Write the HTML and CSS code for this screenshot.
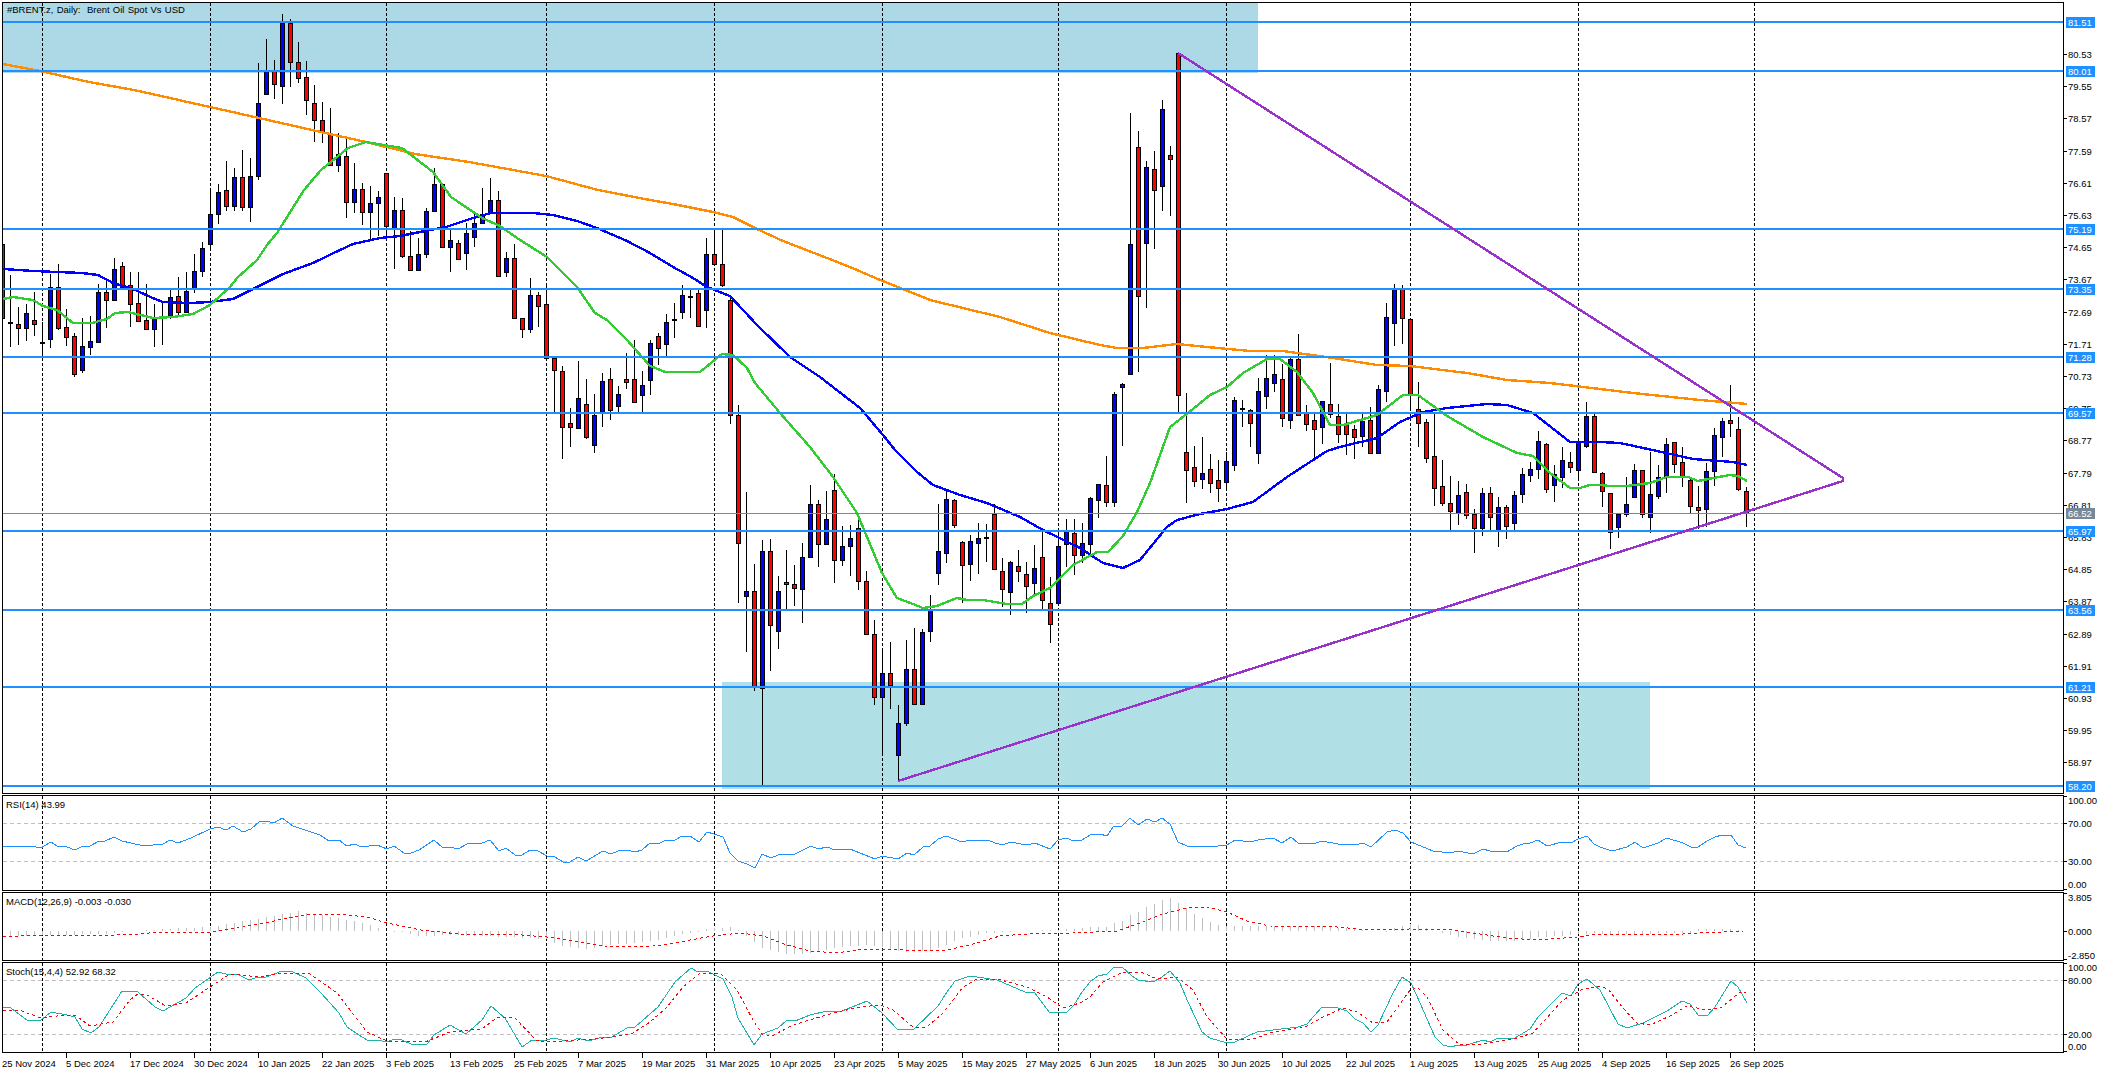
FILE: index.html
```html
<!DOCTYPE html>
<html lang="en">
<head>
    <meta charset="UTF-8">
    <title>#BRENT.z, Daily</title>
    <link rel="stylesheet" href="styles.css">
</head>
<body>
    <div class="terminal">
        <div class="pane pane-main">
            <div class="plot">
                <svg id="plot-main"></svg>
                <div class="legend legend-main">#BRENT.z, Daily:&nbsp; Brent Oil Spot Vs USD</div>
            </div>
            <svg class="scale" id="scale-main"></svg>
        </div>
        <div class="pane pane-rsi">
            <div class="plot">
                <svg id="plot-rsi"></svg>
                <div class="legend">RSI(14) 43.99</div>
            </div>
            <svg class="scale" id="scale-rsi"></svg>
        </div>
        <div class="pane pane-macd">
            <div class="plot">
                <svg id="plot-macd"></svg>
                <div class="legend">MACD(12,26,9) -0.003 -0.030</div>
            </div>
            <svg class="scale" id="scale-macd"></svg>
        </div>
        <div class="pane pane-stoch">
            <div class="plot">
                <svg id="plot-stoch"></svg>
                <div class="legend">Stoch(15,4,4) 52.92 68.32</div>
            </div>
            <svg class="scale" id="scale-stoch"></svg>
        </div>
        <div class="time-axis">
            <span class="date">25 Nov 2024</span>
            <span class="date">5 Dec 2024</span>
            <span class="date">17 Dec 2024</span>
            <span class="date">30 Dec 2024</span>
            <span class="date">10 Jan 2025</span>
            <span class="date">22 Jan 2025</span>
            <span class="date">3 Feb 2025</span>
            <span class="date">13 Feb 2025</span>
            <span class="date">25 Feb 2025</span>
            <span class="date">7 Mar 2025</span>
            <span class="date">19 Mar 2025</span>
            <span class="date">31 Mar 2025</span>
            <span class="date">10 Apr 2025</span>
            <span class="date">23 Apr 2025</span>
            <span class="date">5 May 2025</span>
            <span class="date">15 May 2025</span>
            <span class="date">27 May 2025</span>
            <span class="date">6 Jun 2025</span>
            <span class="date">18 Jun 2025</span>
            <span class="date">30 Jun 2025</span>
            <span class="date">10 Jul 2025</span>
            <span class="date">22 Jul 2025</span>
            <span class="date">1 Aug 2025</span>
            <span class="date">13 Aug 2025</span>
            <span class="date">25 Aug 2025</span>
            <span class="date">4 Sep 2025</span>
            <span class="date">16 Sep 2025</span>
            <span class="date">26 Sep 2025</span>
        </div>
    </div>
    <script src="chart.js"></script>
</body>
</html>
```

FILE: styles.css
```css
body {
    margin: 0;
    background: #fff;
    color: #000;
    font-family: "Liberation Sans", Arial, sans-serif;
    font-size: 9.5px;
    overflow: hidden;
}
.terminal {
    display: flex;
    flex-direction: column;
    gap: 1px;
    padding: 2px 0 0 2px;
    width: 2104px;
    height: 1071px;
}
.pane {
    display: flex;
    flex: none;
}
.pane-main { height: 792px; }
.pane-rsi { height: 96px; }
.pane-macd { height: 69px; }
.pane-stoch { height: 91px; }
.plot {
    position: relative;
    box-sizing: border-box;
    width: 2062px;
    border: 1px solid #000;
    overflow: hidden;
}
.plot svg {
    display: block;
    width: 2060px;
    height: 100%;
}
.scale {
    display: block;
    width: 42px;
    height: 100%;
}
.legend {
    position: absolute;
    top: 3px;
    left: 3px;
    line-height: 12px;
    white-space: nowrap;
}
.legend-main {
    top: 1px;
    left: 4px;
    word-spacing: .6px;
}
.time-axis {
    display: flex;
    margin-top: -1px;
}
.date {
    flex: none;
    width: 64px;
    line-height: 11px;
    white-space: nowrap;
}
.date::before {
    content: "";
    display: block;
    width: 1px;
    height: 5px;
    background: #000;
}
.date:first-child::before {
    visibility: hidden;
}

/* chart shapes */
svg * { shape-rendering: crispEdges; }
.zone-top { fill: #add8e6; }
.zone-bottom { fill: #b0e0e6; }
.grid {
    stroke: #000;
    stroke-width: 1;
    stroke-dasharray: 3 2;
}
.wick { stroke: #000; stroke-width: 1; }
.bull { fill: #00f; stroke: #000; stroke-width: 1; }
.bear { fill: #f00; stroke: #000; stroke-width: 1; }
.line { fill: none; }
.ma200 { stroke: #ff8c00; stroke-width: 2.4; }
.ma50 { stroke: #00f; stroke-width: 2.4; }
.ma20 { stroke: #32cd32; stroke-width: 2.4; }
.hline { stroke: #1e90ff; stroke-width: 2; }
.now { stroke: #778899; stroke-width: 1; }
.trend { stroke: #9932cc; stroke-width: 2.4; fill: none; }
.level {
    stroke: #c0c0c0;
    stroke-width: 1;
    stroke-dasharray: 4 3;
}
.rsi { stroke: #1e90ff; stroke-width: 1; }
.bar { stroke: #c0c0c0; stroke-width: 1; }
.signal {
    stroke: #f00;
    stroke-width: 1;
    stroke-dasharray: 3 3;
}
.stoch { stroke: #20b2aa; stroke-width: 1; }

/* price scale */
.tick { stroke: #000; stroke-width: 1; }
.tick-text { fill: #000; font-size: 9.5px; }
.tag { fill: #1e90ff; }
.tag-now { fill: #778899; }
.tag-text { fill: #fff; font-size: 9.5px; }
```

FILE: chart.js
```js
const NS = 'http://www.w3.org/2000/svg';

// bars: high, body top, body bottom, low, colour (pixel rows of the main pane)
const candles = [
    [244,244,318,318,'r'],[275,322,323,347,'r'],[307,324,328,345,'r'],[304,313,328,341,'b'],[292,320,324,336,'r'],
    [322,342,343,353,'b'],[274,287,339,348,'b'],[264,287,328,330,'r'],[309,327,337,346,'r'],[333,336,374,377,'r'],
    [318,346,370,373,'b'],[316,341,347,355,'b'],[284,292,342,342,'b'],[280,292,300,328,'r'],[258,269,300,300,'b'],
    [262,266,287,288,'r'],[272,285,304,327,'r'],[272,303,321,322,'r'],[284,320,329,329,'r'],[304,318,329,347,'b'],
    [303,317,318,345,'b'],[290,297,316,319,'b'],[277,296,312,316,'r'],[272,291,312,313,'b'],[254,271,288,293,'b'],
    [242,248,271,277,'b'],[188,214,244,250,'b'],[184,192,214,224,'b'],[161,190,206,211,'r'],[168,177,206,211,'b'],
    [150,177,207,211,'r'],[158,176,207,222,'b'],[63,103,176,180,'b'],[39,71,94,94,'b'],[60,71,84,99,'r'],
    [14,23,86,104,'b'],[19,23,62,87,'r'],[42,62,78,83,'r'],[61,77,100,115,'r'],[85,103,120,142,'r'],
    [102,120,131,143,'r'],[108,133,165,165,'r'],[133,154,165,172,'b'],[138,156,202,218,'r'],[163,189,202,213,'b'],
    [183,189,212,225,'r'],[186,203,212,239,'b'],[191,197,203,236,'b'],[173,173,226,236,'r'],[197,210,228,269,'b'],
    [198,210,256,258,'r'],[231,256,270,270,'r'],[238,254,270,270,'b'],[208,211,254,258,'b'],[168,184,211,211,'b'],
    [183,184,247,247,'r'],[229,240,247,272,'b'],[240,243,259,260,'r'],[223,233,253,270,'b'],[213,223,237,247,'b'],
    [188,214,223,223,'b'],[178,200,213,213,'b'],[191,200,276,276,'r'],[252,258,272,277,'b'],[244,258,318,318,'r'],
    [318,318,329,338,'r'],[278,295,329,333,'b'],[292,295,306,327,'r'],[284,304,358,358,'r'],[358,358,370,413,'r'],
    [366,371,427,459,'r'],[408,423,427,447,'r'],[361,398,428,428,'b'],[379,404,437,439,'r'],[394,415,445,453,'b'],
    [373,381,412,427,'b'],[368,379,410,420,'r'],[386,394,406,412,'b'],[353,379,382,389,'r'],[340,379,402,403,'r'],
    [371,385,395,412,'b'],[340,343,380,395,'b'],[333,336,348,365,'r'],[314,322,344,356,'b'],[303,319,320,338,'b'],
    [285,295,312,319,'b'],[290,296,297,318,'b'],[290,293,326,327,'r'],[238,254,310,328,'b'],[229,254,264,264,'r'],
    [230,264,285,287,'r'],[295,300,415,424,'r'],[405,415,543,603,'r'],[492,591,596,652,'b'],[564,591,686,691,'r'],
    [540,551,688,785,'b'],[539,551,625,671,'r'],[576,591,631,649,'b'],[550,582,584,609,'r'],[565,584,588,606,'r'],
    [543,557,589,623,'b'],[485,504,557,557,'b'],[500,504,544,567,'r'],[491,519,544,544,'b'],[474,490,560,583,'r'],
    [526,546,560,566,'b'],[525,538,546,576,'b'],[518,528,581,590,'r'],[571,581,634,634,'r'],[620,634,697,705,'r'],
    [650,673,697,755,'b'],[642,673,685,709,'r'],[705,723,755,781,'b'],[640,669,723,726,'b'],[628,669,704,704,'r'],
    [629,632,704,704,'b'],[595,610,631,642,'b'],[504,551,573,585,'b'],[490,499,553,563,'b'],[499,500,525,528,'r'],
    [541,542,565,603,'r'],[535,541,564,581,'b'],[523,538,543,574,'b'],[524,537,538,562,'b'],[504,514,569,570,'r'],
    [558,571,589,607,'r'],[561,562,592,615,'b'],[550,566,571,582,'r'],[562,574,586,613,'r'],[545,568,583,594,'b'],
    [529,557,600,609,'r'],[577,603,624,643,'r'],[530,546,603,604,'b'],[519,531,544,567,'b'],[519,533,555,575,'r'],
    [523,543,555,563,'b'],[497,498,544,554,'b'],[484,484,500,518,'b'],[456,485,502,507,'r'],[392,394,502,507,'b'],
    [383,384,387,446,'b'],[113,244,374,374,'b'],[131,147,296,372,'r'],[161,167,243,308,'b'],[151,169,190,249,'r'],
    [100,109,186,211,'b'],[146,155,159,216,'r'],[53,53,395,412,'r'],[393,452,470,503,'r'],[446,467,481,487,'r'],
    [437,473,479,489,'b'],[454,469,483,493,'r'],[460,480,488,502,'r'],[452,461,482,490,'b'],[397,400,465,471,'b'],
    [400,408,409,427,'b'],[409,410,423,447,'r'],[378,391,453,464,'b'],[355,378,396,409,'b'],[355,374,383,392,'b'],
    [364,379,418,427,'r'],[358,359,420,429,'b'],[334,359,415,415,'r'],[405,413,424,431,'r'],[413,420,429,459,'r'],
    [401,401,427,444,'b'],[363,404,414,418,'r'],[404,416,434,443,'r'],[413,423,434,455,'r'],[425,429,437,459,'r'],
    [414,421,436,447,'b'],[407,420,453,454,'r'],[385,389,453,454,'b'],[303,317,391,402,'b'],[284,288,323,346,'b'],
    [285,288,318,344,'r'],[319,319,394,410,'r'],[382,409,423,447,'r'],[419,422,458,463,'r'],[413,456,488,506,'r'],
    [460,486,503,506,'r'],[476,503,511,530,'r'],[481,495,513,525,'b'],[484,492,515,519,'r'],[509,514,528,553,'r'],
    [488,493,528,536,'b'],[487,493,517,530,'r'],[497,507,530,547,'b'],[505,507,526,539,'r'],[491,495,523,530,'b'],
    [468,474,494,503,'b'],[462,469,475,482,'b'],[431,441,469,479,'b'],[443,444,489,493,'r'],[465,474,485,502,'b'],
    [447,460,477,488,'b'],[452,462,467,473,'r'],[442,442,470,480,'b'],[402,416,446,448,'b'],[414,416,472,473,'r'],
    [472,473,491,507,'r'],[493,493,532,549,'r'],[514,514,527,538,'b'],[477,504,514,517,'b'],[464,470,497,497,'b'],
    [470,470,514,518,'r'],[452,494,517,533,'b'],[465,477,496,499,'b'],[438,444,477,493,'b'],[442,442,464,473,'r'],
    [447,462,477,487,'r'],[477,480,506,513,'r'],[486,507,510,529,'r'],[463,471,509,527,'b'],[428,435,471,486,'b'],
    [418,421,437,457,'b'],[385,420,423,437,'r'],[417,429,489,491,'r'],[487,491,513,527,'r']
];

const ma200 = '3,64 40,71 89,82 134,90 210,107 259,118 312,130 366,142 415,154 469,162 546,176 598,190 650,200 673,204 713,212 733,217 757,229 783,241 827,258 850,267 880,280 900,288 930,300 1000,317 1050,333 1100,345 1117,348 1143,348 1177,344 1207,347 1250,351 1283,351 1333,358 1377,365 1410,366 1467,373 1507,380 1550,383 1600,389 1633,393 1700,400 1747,404';
const ma50 = '3,269 33,271 82,273 98,275 113,283 133,289 155,299 163,302 190,303 210,302 233,299 253,289 283,274 313,263 340,250 353,244 380,238 400,236 430,230 446,227 473,218 491,213 533,213 553,215 577,221 597,228 627,241 650,253 673,267 693,278 707,287 730,296 757,325 790,357 820,377 860,408 883,435 895,450 917,472 933,485 960,495 987,503 1020,517 1043,530 1080,548 1103,563 1123,568 1140,560 1167,527 1177,520 1200,514 1227,509 1253,502 1287,477 1327,451 1340,447 1377,438 1400,422 1423,412 1447,408 1487,404 1507,405 1533,413 1570,442 1600,442 1620,443 1657,451 1693,459 1733,462 1747,465';
const ma20 = '3,299 13,297 33,300 43,306 57,310 73,323 92,323 107,319 115,313 128,312 153,318 173,317 193,314 210,305 230,287 237,278 257,260 267,245 277,233 304,190 321,170 348,148 366,142 402,148 433,172 451,197 482,218 500,226 517,238 547,257 577,287 595,313 607,320 627,340 650,366 665,372 700,372 722,354 733,355 747,368 755,383 780,413 810,447 833,477 857,513 882,573 897,598 913,604 923,608 937,606 957,598 967,600 983,600 1007,604 1022,604 1033,596 1050,588 1073,565 1097,552 1108,552 1123,536 1137,512 1150,483 1170,427 1193,409 1210,395 1227,387 1243,373 1267,359 1280,359 1297,372 1313,393 1330,425 1343,425 1377,415 1390,405 1403,395 1418,395 1447,416 1483,437 1517,453 1533,456 1550,473 1570,488 1580,488 1590,485 1600,485 1610,486 1627,486 1650,483 1667,477 1688,477 1698,481 1713,478 1730,475 1738,476 1747,481';

const rsi = '3,847 21,846 31,846 41,848 51,842 57,846 67,847 75,850 81,847 90,846 99,841 105,841 114,837 122,841 144,846 163,844 170,840 178,843 191,838 210,829 218,827 226,830 233,826 243,832 251,829 260,821 266,821 274,823 282,818 293,826 320,835 329,841 339,840 347,846 354,844 362,847 377,845 387,849 394,846 404,853 411,853 419,850 434,840 443,848 450,847 458,849 467,844 482,843 490,840 499,851 506,848 515,855 522,855 530,850 538,851 547,856 555,857 563,862 570,862 578,857 586,861 603,851 611,854 618,851 627,850 635,852 642,850 650,843 658,844 666,840 675,840 682,836 690,836 699,842 707,832 714,834 723,837 730,853 738,861 747,864 755,868 762,854 771,858 778,855 795,854 811,846 818,849 827,847 835,850 850,849 875,859 882,856 898,859 907,853 914,855 923,847 930,846 938,839 946,836 962,842 970,840 988,840 995,843 1003,845 1010,842 1027,845 1035,843 1050,849 1058,840 1066,838 1074,841 1082,840 1090,835 1100,834 1107,836 1113,827 1122,826 1130,818 1138,825 1147,819 1155,822 1162,818 1170,824 1178,842 1187,846 1193,847 1202,846 1210,847 1227,845 1235,840 1250,842 1258,840 1273,838 1282,843 1291,837 1298,843 1313,844 1322,841 1338,844 1355,845 1363,843 1371,847 1387,832 1395,830 1403,833 1411,842 1433,851 1442,852 1450,853 1458,851 1473,854 1483,849 1490,851 1507,852 1517,846 1523,844 1530,843 1538,840 1547,846 1562,842 1571,843 1578,839 1587,836 1594,844 1600,847 1612,851 1627,847 1635,842 1643,848 1658,843 1667,838 1683,843 1691,847 1698,847 1707,841 1715,837 1722,835 1731,835 1738,845 1746,848';

// MACD histogram: bar index, height in pixels above (or below) the zero row
const macdBars = [[0,-5],[13,-3],[15,-1],[20,2],[26,4],[31,11],[34,15],[37,20],[39,17],[42,13],[44,10],[46,6],[47,3],[48,0],[50,-1],[52,-5],[56,-4],[64,-6],[68,-8],[70,-15],[73,-18],[75,-15],[77,-13],[79,-12],[81,-10],[83,-7],[85,-3],[87,-1],[88,2],[91,4],[92,1],[93,-5],[94,-11],[95,-17],[96,-19],[98,-23],[100,-23],[102,-21],[104,-17],[106,-15],[108,-14],[110,-16],[112,-20],[113,-21],[115,-20],[117,-17],[118,-14],[119,-10],[120,-7],[121,-6],[123,-2],[125,-1],[128,0],[131,1],[135,3],[136,4],[138,4],[139,8],[140,10],[141,16],[142,19],[143,24],[144,27],[145,31],[146,33],[147,28],[148,23],[149,17],[150,13],[151,9],[152,6],[154,5],[158,5],[165,5],[170,1],[173,-1],[174,3],[175,5],[176,7],[177,6],[178,3],[179,0],[180,-2],[181,-4],[182,-6],[183,-7],[184,-8],[185,-9],[187,-10],[189,-10],[191,-8],[192,-6],[195,-5],[196,-4],[199,-2],[201,-3],[211,-2],[212,2],[216,2],[218,0]];
const macdSignal = '3,937 38,935 115,935 138,934 161,932 191,932 210,932 237,928 260,924 283,919 306,915 337,914 367,917 387,923 421,930 459,934 509,934 547,937 574,941 597,945 613,947 653,946 670,944 690,940 713,936 740,933 763,936 787,945 810,951 837,953 863,949 893,949 913,951 947,950 973,944 1000,936 1027,934 1073,933 1117,931 1140,923 1163,914 1187,908 1207,907 1227,912 1247,921 1270,926 1337,927 1370,930 1410,929 1453,930 1473,933 1507,938 1537,940 1577,937 1600,934 1683,934 1700,933 1743,931';

const stochMain = '3,1007 11,1008 27,1020 41,1020 51,1012 67,1015 75,1017 82,1029 91,1033 99,1027 122,991 138,992 155,1007 163,1011 186,998 195,988 218,972 226,974 239,975 249,980 258,977 266,977 282,971 293,972 306,978 321,993 339,1013 347,1027 362,1037 369,1041 377,1040 387,1042 394,1039 402,1040 411,1044 427,1044 434,1035 450,1025 466,1034 482,1020 491,1006 505,1018 522,1047 532,1040 546,1040 554,1038 570,1042 578,1038 588,1041 603,1037 612,1037 627,1028 635,1027 658,1007 675,982 691,968 698,972 707,971 723,979 732,997 738,1018 754,1045 762,1034 778,1028 787,1020 795,1021 810,1015 827,1011 842,1011 867,1001 882,1013 898,1030 914,1029 938,1006 947,992 955,981 970,976 997,980 1025,992 1035,993 1050,1013 1067,1012 1074,1005 1082,992 1090,982 1098,976 1107,974 1113,968 1122,967 1132,976 1138,980 1153,982 1162,977 1170,971 1180,983 1188,1002 1202,1032 1210,1038 1227,1043 1235,1042 1257,1032 1273,1030 1298,1027 1307,1024 1322,1007 1335,1007 1347,1011 1355,1019 1363,1023 1371,1032 1378,1025 1393,993 1402,977 1411,983 1420,1003 1435,1037 1443,1045 1451,1047 1458,1045 1467,1045 1483,1040 1490,1042 1498,1038 1515,1038 1530,1029 1538,1017 1562,993 1571,996 1578,984 1587,979 1600,990 1618,1024 1627,1028 1643,1023 1667,1011 1682,1001 1690,1004 1698,1015 1707,1016 1715,1007 1731,981 1738,987 1747,1003';
const stochSignal = '3,1010 19,1010 41,1018 57,1016 75,1015 90,1026 113,1022 130,1000 138,994 147,995 166,1006 186,1003 210,987 230,974 260,977 283,973 310,974 337,993 367,1032 387,1041 425,1042 450,1032 482,1029 498,1017 515,1018 536,1040 547,1042 593,1039 613,1037 633,1033 650,1022 667,1007 683,987 700,973 720,973 737,990 753,1020 762,1034 772,1036 793,1025 833,1013 860,1007 880,1005 893,1010 913,1027 927,1027 943,1013 963,987 977,979 997,979 1027,987 1047,997 1063,1008 1080,1003 1090,997 1103,982 1123,972 1143,973 1157,979 1177,977 1193,990 1207,1017 1227,1039 1250,1040 1270,1033 1307,1026 1323,1017 1343,1008 1357,1012 1373,1023 1387,1022 1410,990 1418,988 1427,997 1443,1030 1460,1045 1483,1044 1517,1038 1533,1033 1563,1000 1583,989 1600,986 1608,989 1623,1008 1637,1023 1650,1025 1670,1016 1687,1006 1707,1010 1722,1007 1740,992 1746,992';

const gridX = [42, 210, 386, 546, 714, 882, 1058, 1226, 1410, 1578, 1754];
const hlines = [[22,'81.51'],[71,'80.01'],[229,'75.19'],[289,'73.35'],[357,'71.28'],[413,'69.57'],[531,'65.97'],[610,'63.56'],[687,'61.21'],[786,'58.20']];

function el(parent, tag, attrs, text) {
    const node = document.createElementNS(NS, tag);
    for (const k in attrs) node.setAttribute(k, attrs[k]);
    if (text !== undefined) node.textContent = text;
    parent.appendChild(node);
    return node;
}

// each svg uses screen coordinates, so the reference pixel rows can be used as they are
function setup(id, x, y, w, h) {
    const svg = document.getElementById(id);
    svg.setAttribute('viewBox', `${x} ${y} ${w} ${h}`);
    return svg;
}

function grid(svg, y1, y2) {
    gridX.forEach(x => el(svg, 'line', {class: 'grid', x1: x + .5, x2: x + .5, y1: y1, y2: y2}));
}

function level(svg, y) {
    el(svg, 'line', {class: 'level', x1: 3, x2: 2063, y1: y + .5, y2: y + .5});
}

function poly(svg, cls, points) {
    el(svg, 'polyline', {class: 'line ' + cls, points: points});
}

function tick(svg, y, label, textY) {
    el(svg, 'line', {class: 'tick', x1: 2064, x2: 2067, y1: y + .5, y2: y + .5});
    el(svg, 'text', {class: 'tick-text', x: 2068, y: (textY === undefined ? y : textY) + 3.5}, label);
}

function tag(svg, y, label, cls) {
    el(svg, 'rect', {class: cls, x: 2066, y: y - 5, width: 29, height: 11});
    el(svg, 'text', {class: 'tag-text', x: 2068, y: y + 4}, label);
}

function macdHeight(i) {
    for (let k = 1; k < macdBars.length; k++) {
        const [i0, v0] = macdBars[k - 1];
        const [i1, v1] = macdBars[k];
        if (i <= i1) return v0 + (v1 - v0) * (i - i0) / (i1 - i0);
    }
    return 0;
}

// main pane
const main = setup('plot-main', 3, 3, 2060, 790);
el(main, 'rect', {class: 'zone-top', x: 3, y: 3, width: 1255, height: 70});
el(main, 'rect', {class: 'zone-bottom', x: 722, y: 682, width: 928, height: 107});
grid(main, 3, 793);
candles.forEach((c, i) => {
    const x = 2.5 + 8 * i;
    el(main, 'line', {class: 'wick', x1: x, x2: x, y1: c[0], y2: c[3]});
    el(main, 'rect', {class: c[4] === 'r' ? 'bear' : 'bull', x: x - 2, y: c[1] + .5, width: 4, height: c[2] - c[1]});
});
poly(main, 'ma200', ma200);
poly(main, 'ma50', ma50);
poly(main, 'ma20', ma20);
el(main, 'line', {class: 'now', x1: 3, x2: 2063, y1: 513.5, y2: 513.5});
hlines.forEach(h => el(main, 'line', {class: 'hline', x1: 3, x2: 2063, y1: h[0], y2: h[0]}));
el(main, 'polyline', {class: 'trend', points: '1178,53 1843,478 1843,481 898,781'});

const mainScale = setup('scale-main', 2064, 2, 42, 792);
for (let k = 0; k < 23; k++) {
    tick(mainScale, Math.round(54 + 32.2 * k), (80.53 - .98 * k).toFixed(2));
}
hlines.forEach(h => tag(mainScale, h[0], h[1], 'tag'));
tag(mainScale, 513, '66.52', 'tag-now');

// RSI pane
const rsiPlot = setup('plot-rsi', 3, 796, 2060, 94);
grid(rsiPlot, 796, 890);
level(rsiPlot, 823);
level(rsiPlot, 861);
poly(rsiPlot, 'rsi', rsi);

const rsiScale = setup('scale-rsi', 2064, 795, 42, 96);
tick(rsiScale, 796, '100.00', 800);
tick(rsiScale, 823, '70.00');
tick(rsiScale, 861, '30.00');
tick(rsiScale, 889, '0.00', 884);

// MACD pane
const macdPlot = setup('plot-macd', 3, 893, 2060, 67);
grid(macdPlot, 893, 960);
for (let i = 0; i <= 218; i++) {
    const h = macdHeight(i);
    if (Math.abs(h) < .5) continue;
    const x = 2.5 + 8 * i;
    el(macdPlot, 'line', {class: 'bar', x1: x, x2: x, y1: 931, y2: 931 - h});
}
poly(macdPlot, 'signal', macdSignal);

const macdScale = setup('scale-macd', 2064, 892, 42, 69);
tick(macdScale, 893, '3.805', 897);
tick(macdScale, 931, '0.000');
tick(macdScale, 959, '-2.850', 955);

// stochastic pane
const stochPlot = setup('plot-stoch', 3, 963, 2060, 89);
grid(stochPlot, 963, 1052);
level(stochPlot, 980);
level(stochPlot, 1034);
poly(stochPlot, 'stoch', stochMain);
poly(stochPlot, 'signal', stochSignal);

const stochScale = setup('scale-stoch', 2064, 962, 42, 91);
tick(stochScale, 963, '100.00', 967);
tick(stochScale, 980, '80.00');
tick(stochScale, 1034, '20.00');
tick(stochScale, 1051, '0.00', 1046);
```
